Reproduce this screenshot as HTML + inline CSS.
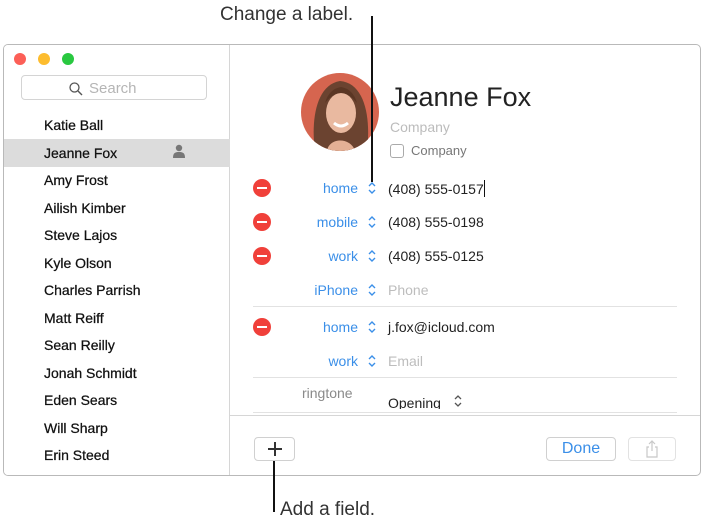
<!DOCTYPE html>
<html><head><style>
*{margin:0;padding:0;box-sizing:border-box}
body{width:702px;height:528px;background:#fff;font-family:"Liberation Sans",sans-serif;position:relative;overflow:hidden}
.a{position:absolute}
.win{left:3px;top:44px;width:698px;height:432px;border:1px solid #b9b9b9;border-radius:5px;background:#fff;overflow:hidden}
.side{left:0;top:0;width:226px;height:432px;background:#fff;border-right:1px solid #d6d6d6}
.name{position:absolute;left:40px;font-size:14px;color:#111;-webkit-text-stroke:0.25px #111}
.lbl{position:absolute;right:344px;font-size:14px;color:#3b8fe8;text-align:right}
.chev{position:absolute;left:368px;width:8px;height:12px}
.val{position:absolute;left:388px;font-size:14px;color:#222}
.ph{color:#bdbdbd}
.minus{position:absolute;left:253px;width:18px;height:18px;border-radius:50%;background:#f0403a}
.minus:after{content:"";position:absolute;left:4px;top:8px;width:10px;height:2px;background:#fff}
.hr{position:absolute;left:253px;width:424px;height:1px;background:#e2e2e2}
</style></head><body>
<div class="a" style="left:220px;top:4px;font-size:19px;color:#333">Change a label.</div>
<div class="a" style="left:371px;top:16px;width:2px;height:166px;background:#111;z-index:5"></div>
<div class="a" style="left:273px;top:461px;width:2px;height:51px;background:#111;z-index:5"></div>
<div class="a" style="left:280px;top:499px;font-size:19px;color:#333">Add a field.</div>

<div class="a win">
 <div class="a side">
  <div class="a" style="left:10px;top:8px;width:12px;height:12px;border-radius:50%;background:#fc5f57"></div>
  <div class="a" style="left:34px;top:8px;width:12px;height:12px;border-radius:50%;background:#fdbc2e"></div>
  <div class="a" style="left:58px;top:8px;width:12px;height:12px;border-radius:50%;background:#29c840"></div>
  <div class="a" style="left:17px;top:30px;width:186px;height:25px;border:1px solid #d4d4d4;border-radius:4px"></div>
  <svg class="a" style="left:65px;top:37px" width="14" height="14" viewBox="0 0 14 14"><circle cx="5.5" cy="5.5" r="4.5" fill="none" stroke="#555" stroke-width="1.3"/><path d="M9 9L13 13" stroke="#555" stroke-width="1.4"/></svg>
  <div class="a" style="left:85px;top:35px;font-size:15px;color:#b5b5b5">Search</div>
  <div class="a" style="left:0;top:94px;width:226px;height:28px;background:#dcdcdc"></div>
  <svg class="a" style="left:168px;top:99px" width="14" height="14" viewBox="0 0 14 14"><circle cx="7" cy="4" r="3.2" fill="#777"/><path d="M1 14C1 9 3 8 7 8S13 9 13 14Z" fill="#777"/></svg>
  <div class="name" style="top:72px">Katie Ball</div>
  <div class="name" style="top:100px">Jeanne Fox</div>
  <div class="name" style="top:127px">Amy Frost</div>
  <div class="name" style="top:155px">Ailish Kimber</div>
  <div class="name" style="top:182px">Steve Lajos</div>
  <div class="name" style="top:210px">Kyle Olson</div>
  <div class="name" style="top:237px">Charles Parrish</div>
  <div class="name" style="top:265px">Matt Reiff</div>
  <div class="name" style="top:292px">Sean Reilly</div>
  <div class="name" style="top:320px">Jonah Schmidt</div>
  <div class="name" style="top:347px">Eden Sears</div>
  <div class="name" style="top:375px">Will Sharp</div>
  <div class="name" style="top:402px">Erin Steed</div>
 </div>
 <div class="a" style="left:226px;top:370px;width:472px;height:1px;background:#d6d6d6"></div>
</div>

<svg class="a" style="left:301px;top:73px" width="78" height="78" viewBox="0 0 78 78">
 <defs><clipPath id="c"><circle cx="39" cy="39" r="39"/></clipPath></defs>
 <g clip-path="url(#c)">
  <rect width="78" height="78" fill="#d6654f"/>
  <path d="M14 78C10 50 14 12 39 8C64 10 70 45 66 78Z" fill="#6b4330"/>
  <ellipse cx="40" cy="40" rx="15" ry="20" fill="#e9b9a0"/>
  <path d="M26 78C28 64 50 64 54 78Z" fill="#e4b095"/>
  <path d="M33 50Q40 56 47 50" stroke="#fff" stroke-width="3" fill="none"/>
  <path d="M24 30Q40 10 56 30Q52 16 40 14Q28 16 24 30Z" fill="#5a3624"/>
 </g>
</svg>
<div class="a" style="left:390px;top:82px;font-size:27px;color:#222">Jeanne Fox</div>
<div class="a" style="left:390px;top:119px;font-size:14px;color:#bcbcbc">Company</div>
<div class="a" style="left:390px;top:144px;width:14px;height:14px;border:1px solid #aaa;border-radius:3px"></div>
<div class="a" style="left:411px;top:143px;font-size:13px;color:#777">Company</div>

<div class="minus" style="top:179px"></div>
<div class="minus" style="top:213px"></div>
<div class="minus" style="top:247px"></div>
<div class="minus" style="top:318px"></div>

<div class="lbl" style="top:180px">home</div>
<div class="lbl" style="top:214px">mobile</div>
<div class="lbl" style="top:248px">work</div>
<div class="lbl" style="top:282px">iPhone</div>
<div class="lbl" style="top:319px">home</div>
<div class="lbl" style="top:353px">work</div>
<div class="a" style="left:302px;top:385px;font-size:14px;color:#8a8a8a">ringtone</div>

<svg class="chev" style="top:182px" viewBox="0 0 8 12"><path d="M1 4L4 1L7 4M1 8L4 11L7 8" fill="none" stroke="#3b8fe8" stroke-width="1.4"/></svg>
<svg class="chev" style="top:216px" viewBox="0 0 8 12"><path d="M1 4L4 1L7 4M1 8L4 11L7 8" fill="none" stroke="#3b8fe8" stroke-width="1.4"/></svg>
<svg class="chev" style="top:250px" viewBox="0 0 8 12"><path d="M1 4L4 1L7 4M1 8L4 11L7 8" fill="none" stroke="#3b8fe8" stroke-width="1.4"/></svg>
<svg class="chev" style="top:284px" viewBox="0 0 8 12"><path d="M1 4L4 1L7 4M1 8L4 11L7 8" fill="none" stroke="#3b8fe8" stroke-width="1.4"/></svg>
<svg class="chev" style="top:321px" viewBox="0 0 8 12"><path d="M1 4L4 1L7 4M1 8L4 11L7 8" fill="none" stroke="#3b8fe8" stroke-width="1.4"/></svg>
<svg class="chev" style="top:355px" viewBox="0 0 8 12"><path d="M1 4L4 1L7 4M1 8L4 11L7 8" fill="none" stroke="#3b8fe8" stroke-width="1.4"/></svg>

<div class="val" style="top:180px">(408) 555-0157<span style="display:inline-block;width:1px;height:17px;background:#111;vertical-align:-3px"></span></div>
<div class="val" style="top:214px">(408) 555-0198</div>
<div class="val" style="top:248px">(408) 555-0125</div>
<div class="val ph" style="top:282px">Phone</div>
<div class="hr" style="top:306px"></div>
<div class="val" style="top:319px">j.fox@icloud.com</div>
<div class="val ph" style="top:353px">Email</div>
<div class="hr" style="top:377px"></div>
<div class="a" style="left:388px;top:395px;width:90px;height:14px;overflow:hidden"><span style="font-size:14px;color:#222">Opening</span><svg style="position:absolute;left:66px;top:0" width="8" height="12" viewBox="0 0 8 12"><path d="M1 4L4 1L7 4M1 8L4 11L7 8" fill="none" stroke="#555" stroke-width="1.3"/></svg></div>
<div class="hr" style="top:412px"></div>

<div class="a" style="left:254px;top:437px;width:41px;height:24px;border:1px solid #d0d0d0;border-radius:4px;background:#fff;z-index:6"></div>
<div class="a" style="left:268px;top:448px;width:14px;height:1.5px;background:#333;z-index:7"></div>
<div class="a" style="left:274.3px;top:442px;width:1.5px;height:14px;background:#333;z-index:7"></div>
<div class="a" style="left:546px;top:437px;width:70px;height:24px;border:1px solid #d0d0d0;border-radius:4px;background:#fff;color:#3b8fe8;font-size:16px;text-align:center;line-height:22px">Done</div>
<div class="a" style="left:628px;top:437px;width:48px;height:24px;border:1px solid #e2e2e2;border-radius:4px;background:#fff"></div>
<svg class="a" style="left:644px;top:439px" width="16" height="20" viewBox="0 0 16 20"><path d="M5 8H3V18H13V8H11M8 2V12M5 5L8 2L11 5" fill="none" stroke="#c8c8c8" stroke-width="1.2"/></svg>
</body></html>
